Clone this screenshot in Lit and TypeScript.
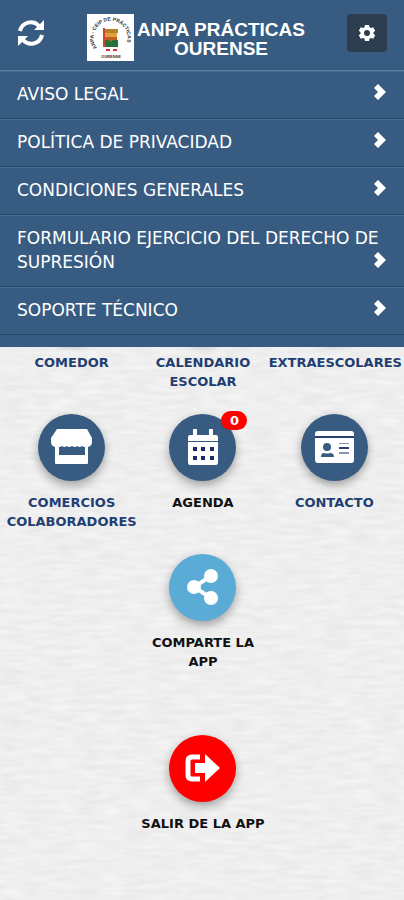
import { LitElement, html, css, svg, nothing } from "lit";
import { customElement } from "lit/decorators.js";
import { classMap } from "lit/directives/class-map.js";

interface Tile {
  label: string;
  icon?: keyof typeof icons;
  tone?: "share" | "exit";
  dark?: boolean;
  badge?: number;
}

const icons = {
  store: svg`<path fill="#fff" d="M19 15h30l5 9v4q0 4-4 5v16q0 1-1 1H18q-1 0-1-1V33q-4-1-4-5v-4z"/>
    <path fill="#385b81" d="M21 33q2 0 3-1 2 2 5 0 2 2 5 0 3 2 5 0 3 2 5 0 1 1 3 1v8H21z"/>`,
  calendar: svg`<path fill="#fff" d="M24 15h4v6h12v-6h4v6h3q2 0 2 2v4H19v-4q0-2 2-2h3zM19 28h30v20q0 3-2 3H21q-2 0-2-3z"/>
    <path fill="#1c2b66" d="M24 33h4v4h-4zM32 33h4v4h-4zM41 33h4v4h-4zM24 42h4v4h-4zM32 42h4v4h-4zM41 42h4v4h-4z"/>`,
  card: svg`<rect x="14" y="17" width="39" height="32" rx="3" fill="#fff"/>
    <path fill="#2b3f75" d="M14 22h39v2H14zM38 33h10v2H38z"/>
    <path fill="#8793ad" d="M38 29h10v1H38zM38 38h10v2H38z"/>
    <circle cx="26" cy="33" r="4" fill="#385b81"/>
    <path fill="#385b81" d="M20 43q0-4 3-4 3 1 6 0 4 0 4 4z"/>`,
  share: svg`<path d="M42 22 25 33l17 11" fill="none" stroke="#fff" stroke-width="4"/>
    <circle cx="42" cy="22" r="7" fill="#fff"/><circle cx="25" cy="33" r="7" fill="#fff"/>
    <circle cx="42" cy="44" r="7" fill="#fff"/>`,
  exit: svg`<path d="M31 22h-8q-4 0-4 4v14q0 4 4 4h8" fill="none" stroke="#fff" stroke-width="5"/>
    <path fill="#fff" d="M26 28h10v-9l15 14-15 14v-9H26z"/>`,
};

const MENU = [
  "AVISO LEGAL",
  "POLÍTICA DE PRIVACIDAD",
  "CONDICIONES GENERALES",
  "FORMULARIO EJERCICIO DEL DERECHO DE SUPRESIÓN",
  "SOPORTE TÉCNICO",
];

const TILES: Tile[] = [
  { label: "COMEDOR" },
  { label: "CALENDARIO ESCOLAR" },
  { label: "EXTRAESCOLARES" },
  { label: "COMERCIOS COLABORADORES", icon: "store" },
  { label: "AGENDA", icon: "calendar", dark: true, badge: 0 },
  { label: "CONTACTO", icon: "card" },
];

const ACTIONS: Tile[] = [
  { label: "COMPARTE LA APP", icon: "share", tone: "share", dark: true },
  { label: "SALIR DE LA APP", icon: "exit", tone: "exit", dark: true },
];

@customElement("app-header")
class AppHeader extends LitElement {
  static styles = css`
    :host {
      display: flex;
      align-items: flex-start;
      box-sizing: border-box;
      height: 71px;
      padding: 14px 17px 0;
      border-bottom: 1px solid #5d7fa3;
      color: #fff;
    }
    button {
      padding: 0;
      border: 0;
      background: none;
      color: inherit;
    }
    .refresh {
      width: 28px;
      height: 38px;
    }
    .settings {
      width: 40px;
      height: 38px;
      border-radius: 4px;
      background: #2c3e50;
    }
    svg {
      display: block;
      margin: auto;
    }
    .brand {
      flex: 1;
      display: flex;
      justify-content: center;
      gap: 3px;
    }
    .brand svg {
      margin: 0;
      flex: none;
    }
    h1 {
      margin: 6px 0 0;
      font: bold 19px/19px "Liberation Sans", Arial, sans-serif;
      text-align: center;
    }
    .ring {
      font: bold 5px "Liberation Sans", Arial, sans-serif;
    }
    .town {
      font: bold 4px "Liberation Sans", Arial, sans-serif;
    }
  `;

  render() {
    return html`
      <button class="refresh" aria-label="Actualizar">
        <svg width="28" height="28" viewBox="0 0 28 28" fill="none">
          <path d="M3 12A11 11 0 0 1 22 7M25 16A11 11 0 0 1 6 21" stroke="#fff" stroke-width="4" />
          <path d="M27 1v10H17zM1 27V17h10z" fill="#fff" />
        </svg>
      </button>
      <div class="brand">
        <svg width="47" height="47" viewBox="0 0 47 47" aria-hidden="true">
          <rect width="47" height="47" fill="#fff" />
          <path id="arc" d="M10 34A17 17 0 1 1 37 34" fill="none" />
          <text class="ring" fill="#333"><textPath href="#arc">ANPA - CEIP DE PRÁCTICAS</textPath></text>
          <path d="M17 15h14v4H17z" fill="#b5822b" />
          <path d="M18 19h12v5H18z" fill="#e0a040" />
          <path d="M18 23h12v6H18z" fill="#c25e22" />
          <path d="M17 26h5l2 2 2-2h5v7H17z" fill="#25733b" />
          <path d="M16 14h2v19h-2z" fill="#d2452c" />
          <path d="M19 35h4v2h-4zM26 35h4v2h-4z" fill="#e02b2b" />
          <text class="town" x="24" y="44" text-anchor="middle" fill="#333">OURENSE</text>
        </svg>
        <h1>ANPA PRÁCTICAS<br />OURENSE</h1>
      </div>
      <button class="settings" aria-label="Ajustes">
        <svg width="18" height="18" viewBox="0 0 18 18">
          <path
            fill="#fff"
            fill-rule="evenodd"
            d="M7 1h4l.5 2.300 1.400.8 2.300-.8 2 3.400L15.500 8.200v1.600l1.700 1.500-2 3.400-2.300-.8-1.400.8L11 17H7l-.5-2.300-1.400-.8-2.300.8-2-3.400L2.500 9.800V8.200L.8 6.700l2-3.400 2.300.8 1.400-.8zM9 6a3 3 0 1 0 0 6 3 3 0 0 0 0-6z"
          />
        </svg>
      </button>
    `;
  }
}

@customElement("app-menu")
class AppMenu extends LitElement {
  static styles = css`
    :host {
      display: block;
      padding-bottom: 12px;
    }
    ul {
      margin: 0;
      padding: 0;
      list-style: none;
    }
    a {
      display: grid;
      padding: 10px 17px 12px;
      border-top: 1px solid #456a90;
      border-bottom: 1px solid #1d4b6c;
      color: #fff;
      font: 17px/24px Verdana, "DejaVu Sans", sans-serif;
      text-decoration: none;
    }
    .text,
    svg {
      grid-area: 1 / 1;
    }
    .text {
      margin-right: -8px;
    }
    svg {
      place-self: end;
      margin-bottom: 5px;
    }
  `;

  render() {
    return html`<ul>
      ${MENU.map(
        (text) => html`<li>
          <a href="#">
            <span class="text">${text}</span>
            <svg width="14" height="18" viewBox="0 0 14 18" aria-hidden="true">
              <path d="M5 1l8 8-8 8-4-4 4-4-4-4z" fill="#fff" />
            </svg>
          </a>
        </li>`
      )}
    </ul>`;
  }
}

@customElement("app-root")
class AppRoot extends LitElement {
  static styles = css`
    :host {
      display: block;
      position: relative;
      min-height: 100vh;
      box-sizing: border-box;
      padding: 274px 4px 0 6px;
      overflow: hidden;
      background: #eeeeee;
      font-family: Verdana, "DejaVu Sans", sans-serif;
    }
    .paper {
      position: absolute;
      inset: 0;
      width: 100%;
      height: 100%;
    }
    .panel {
      position: absolute;
      top: 0;
      left: 0;
      right: 0;
      background: #385b81;
    }
    main {
      position: relative;
      display: grid;
      grid-template-columns: repeat(3, minmax(0, 1fr));
      grid-auto-rows: 140px;
    }
    .tile {
      display: flex;
      flex-direction: column;
      gap: 12px;
      padding: 0;
      border: 0;
      background: none;
      color: #1f3f73;
      font: bold 13px/19px Verdana, "DejaVu Sans", sans-serif;
    }
    .tile.dark {
      color: #111;
    }
    .tile.action {
      grid-column: 2;
    }
    .tile.exit {
      margin-top: 41px;
    }
    .disc {
      position: relative;
      align-self: center;
      width: 67px;
      height: 67px;
      border-radius: 50%;
      background: #385b81;
      box-shadow: 0 4px 10px #0005;
    }
    .share .disc {
      background: #5aabd6;
    }
    .exit .disc {
      background: #f00;
    }
    .label {
      width: 100%;
      text-align: center;
    }
    .badge {
      position: absolute;
      top: -3px;
      right: -11px;
      width: 26px;
      border-radius: 10px;
      background: #f00;
      color: #fff;
      text-align: center;
    }
  `;

  private tile(t: Tile) {
    const classes = {
      tile: true,
      dark: !!t.dark,
      action: !!t.tone,
      share: t.tone === "share",
      exit: t.tone === "exit",
    };
    return html`<button class=${classMap(classes)}>
      <span class="disc">
        ${t.icon
          ? html`<svg width="67" height="67" viewBox="0 0 67 67" aria-hidden="true">${icons[t.icon]}</svg>`
          : nothing}
        ${t.badge === undefined ? nothing : html`<span class="badge">${t.badge}</span>`}
      </span>
      <span class="label">${t.label}</span>
    </button>`;
  }

  render() {
    return html`
      <svg class="paper" aria-hidden="true">
        <filter id="grain" x="0" y="0" width="100%" height="100%" color-interpolation-filters="sRGB">
          <feTurbulence type="fractalNoise" baseFrequency="0.04 0.2" numOctaves="2" seed="4" />
          <feColorMatrix values="0.07 0 0 0 0.9  0.07 0 0 0 0.9  0.07 0 0 0 0.9  0 0 0 0 1" />
        </filter>
        <rect width="100%" height="100%" filter="url(#grain)" />
      </svg>
      <main>${TILES.map((t) => this.tile(t))}${ACTIONS.map((t) => this.tile(t))}</main>
      <nav class="panel">
        <app-header></app-header>
        <app-menu></app-menu>
      </nav>
    `;
  }
}
